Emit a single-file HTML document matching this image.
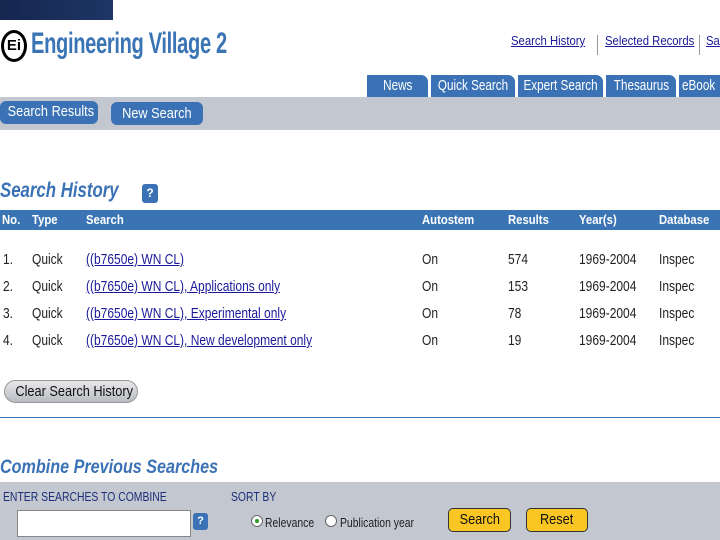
<!DOCTYPE html>
<html><head><style>
*{margin:0;padding:0;box-sizing:border-box}
body{width:720px;height:540px;overflow:hidden;background:#fff;font-family:"Liberation Sans",sans-serif;position:relative}
.a{position:absolute;white-space:nowrap}
.n{transform:scaleX(.87);transform-origin:0 0}
.r{transform:scaleX(.8);transform-origin:0 0}
.c{display:inline-block;transform:scaleX(.85)}
.tab{position:absolute;top:75px;height:22px;background:#3a72b5;color:#fff;font-size:15px;line-height:22px;text-align:center;border-radius:0 7px 0 0;overflow:hidden;white-space:nowrap}
.tab .c{transform:scaleX(.78);margin:0 -20px}
.hdr{color:#fff;font-weight:bold;font-size:13px;top:212px}
.row{font-size:15px;color:#222}
.lnk{color:#1a1a9a;text-decoration:underline}
.q{position:absolute;background:#3a72b5;color:#fff;font-weight:bold;text-align:center;border-radius:3px}
</style></head><body>
<div class="a" style="left:0;top:0;width:113px;height:20px;background:linear-gradient(90deg,#15264f,#1e3666)"></div>
<div class="a" style="left:1px;top:30px;width:26px;height:32px;border:3px solid #000;border-radius:50%;font:bold 15px 'Liberation Sans',sans-serif;line-height:26px;text-align:center;color:#000">Ei</div>
<div class="a" style="left:31px;top:27px;font-size:30px;font-weight:bold;color:#3a74b4;letter-spacing:-0.5px;transform:scaleX(.67);transform-origin:0 0">Engineering Village 2</div>
<div class="a lnk n" style="left:511px;top:33px;font-size:13px">Search History</div>
<div class="a" style="left:597px;top:35px;width:1px;height:20px;background:#999"></div>
<div class="a lnk n" style="left:605px;top:33px;font-size:13px">Selected Records</div>
<div class="a" style="left:699px;top:35px;width:1px;height:20px;background:#999"></div>
<div class="a lnk n" style="left:706px;top:33px;font-size:13px">Sa</div>
<div class="tab" style="left:367px;width:61px"><span class="c">News</span></div>
<div class="tab" style="left:431px;width:84px"><span class="c">Quick Search</span></div>
<div class="tab" style="left:518px;width:85px"><span class="c">Expert Search</span></div>
<div class="tab" style="left:606px;width:70px"><span class="c">Thesaurus</span></div>
<div class="tab" style="left:679px;width:45px;border-radius:0;text-align:left;padding-left:3px"><span class="c" style="transform-origin:0 0;margin:0">eBook</span></div>
<div class="a" style="left:0;top:97px;width:720px;height:33px;background:#c3c7cf"></div>
<div class="a" style="left:0;top:101px;width:98px;height:23px;background:#3a72b5;border-radius:6px;color:#fff;font-size:15px;line-height:22px;text-align:center"><span class="c">Search Results</span></div>
<div class="a" style="left:111px;top:102px;width:92px;height:23px;background:#3a72b5;border-radius:6px;color:#fff;font-size:15px;line-height:23px;text-align:center"><span class="c">New Search</span></div>
<div class="a" style="left:0;top:179px;font-size:21px;font-weight:bold;font-style:italic;color:#3a72b5;transform:scaleX(.8);transform-origin:0 0">Search History</div>
<div class="q" style="left:142px;top:184px;width:16px;height:19px;font-size:12px;line-height:19px">?</div>
<div class="a" style="left:0;top:210px;width:720px;height:20px;background:#3a74b4"></div>
<div class="a hdr n" style="left:2px">No.</div><div class="a hdr n" style="left:32px">Type</div><div class="a hdr n" style="left:86px">Search</div>
<div class="a hdr n" style="left:422px">Autostem</div><div class="a hdr n" style="left:508px">Results</div><div class="a hdr n" style="left:579px">Year(s)</div><div class="a hdr n" style="left:659px">Database</div>
<div class="a row r" style="left:3px;top:251px">1.</div><div class="a row r" style="left:32px;top:251px">Quick</div><div class="a row lnk r" style="left:86px;top:251px">((b7650e) WN CL)</div><div class="a row r" style="left:422px;top:251px">On</div><div class="a row r" style="left:508px;top:251px">574</div><div class="a row r" style="left:579px;top:251px">1969-2004</div><div class="a row r" style="left:659px;top:251px">Inspec</div>
<div class="a row r" style="left:3px;top:278px">2.</div><div class="a row r" style="left:32px;top:278px">Quick</div><div class="a row lnk r" style="left:86px;top:278px">((b7650e) WN CL), Applications only</div><div class="a row r" style="left:422px;top:278px">On</div><div class="a row r" style="left:508px;top:278px">153</div><div class="a row r" style="left:579px;top:278px">1969-2004</div><div class="a row r" style="left:659px;top:278px">Inspec</div>
<div class="a row r" style="left:3px;top:305px">3.</div><div class="a row r" style="left:32px;top:305px">Quick</div><div class="a row lnk r" style="left:86px;top:305px">((b7650e) WN CL), Experimental only</div><div class="a row r" style="left:422px;top:305px">On</div><div class="a row r" style="left:508px;top:305px">78</div><div class="a row r" style="left:579px;top:305px">1969-2004</div><div class="a row r" style="left:659px;top:305px">Inspec</div>
<div class="a row r" style="left:3px;top:332px">4.</div><div class="a row r" style="left:32px;top:332px">Quick</div><div class="a row lnk r" style="left:86px;top:332px">((b7650e) WN CL), New development only</div><div class="a row r" style="left:422px;top:332px">On</div><div class="a row r" style="left:508px;top:332px">19</div><div class="a row r" style="left:579px;top:332px">1969-2004</div><div class="a row r" style="left:659px;top:332px">Inspec</div>
<div class="a" style="left:4px;top:380px;width:134px;height:23px;border-radius:12px;background:linear-gradient(#e8e8e8,#b8bcc2);border:1px solid #999;font-size:15px;line-height:21px;text-align:center;color:#111"><span class="c">Clear Search History</span></div>
<div class="a" style="left:0;top:417px;width:720px;height:1px;background:#3a72b5"></div>
<div class="a" style="left:0;top:457px;font-size:19px;font-weight:bold;font-style:italic;color:#3a72b5;transform:scaleX(.85);transform-origin:0 0">Combine Previous Searches</div>
<div class="a" style="left:0;top:482px;width:720px;height:58px;background:#c3c7cf"></div>
<div class="a r" style="left:3px;top:489px;font-size:13px;color:#1d2e7a">ENTER SEARCHES TO COMBINE</div>
<div class="a r" style="left:231px;top:489px;font-size:13px;color:#1d2e7a">SORT BY</div>
<div class="a" style="left:17px;top:510px;width:174px;height:27px;background:#fff;border:1px solid #888"></div>
<div class="q" style="left:193px;top:513px;width:15px;height:17px;font-size:11px;line-height:17px">?</div>
<div class="a" style="left:251px;top:515px;width:12px;height:12px;border-radius:50%;background:#fff;border:1px solid #666"><div style="margin:3px;width:4px;height:4px;border-radius:50%;background:#2a9a2a"></div></div>
<div class="a r" style="left:265px;top:515px;font-size:13px;color:#222">Relevance</div>
<div class="a" style="left:325px;top:515px;width:12px;height:12px;border-radius:50%;background:#fff;border:1px solid #666"></div>
<div class="a r" style="left:340px;top:515px;font-size:13px;color:#222">Publication year</div>
<div class="a" style="left:448px;top:508px;width:63px;height:24px;background:#f9c623;border:1px solid #333;border-radius:5px;font-size:15px;line-height:22px;text-align:center;color:#111"><span class="c">Search</span></div>
<div class="a" style="left:526px;top:508px;width:62px;height:24px;background:#f9c623;border:1px solid #333;border-radius:5px;font-size:15px;line-height:22px;text-align:center;color:#111"><span class="c">Reset</span></div>
</body></html>
